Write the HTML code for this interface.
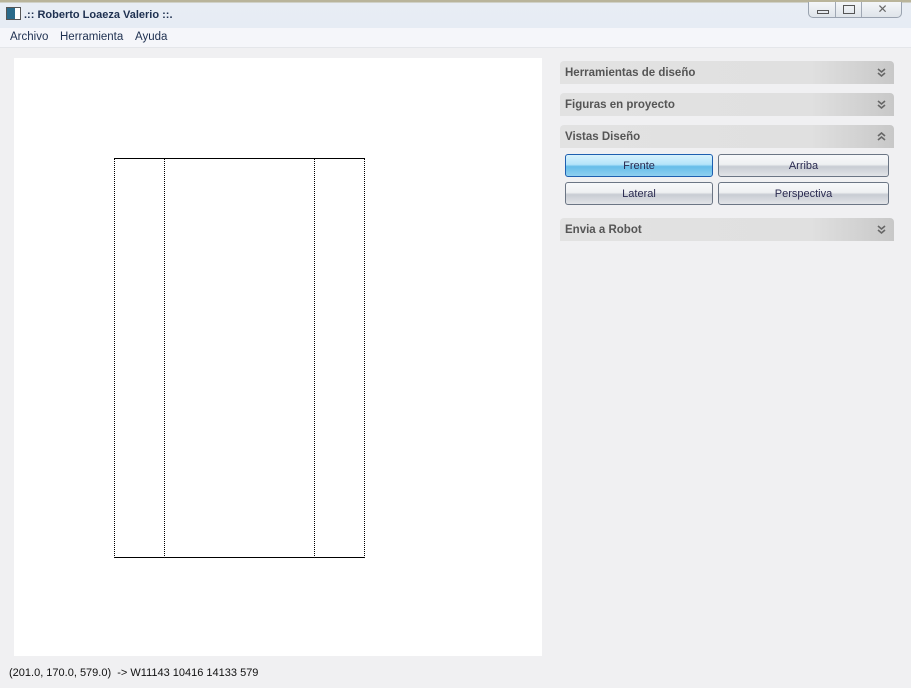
<!DOCTYPE html>
<html><head><meta charset="utf-8"><style>
*{margin:0;padding:0;box-sizing:border-box}
body{width:911px;height:688px;overflow:hidden;background:#f0f0f2;font-family:"Liberation Sans",sans-serif;position:relative}
.title{position:absolute;left:0;top:0;width:911px;height:28px;background:linear-gradient(#b9b49a 0,#b9b49a 2px,#e8edf4 3px,#e6ecf4 28px);}
.title .t{position:absolute;left:24px;top:9px;font-size:11px;font-weight:bold;color:#1e3050}
.ico{position:absolute;left:6px;top:7px;width:15px;height:13px;border:1px solid #555;background:linear-gradient(90deg,#2a6a8a 0 60%,#fff 60%)}
.ctl{position:absolute;left:808px;top:2px;width:94px;height:16px;border:1px solid #9aa3b0;border-top:none;border-radius:0 0 5px 5px;background:linear-gradient(#f4f6f9,#dfe4ea)}
.ctl div{position:absolute;top:0;height:15px;border-right:1px solid #a0a8b4}
.menu{position:absolute;left:0;top:28px;width:911px;height:20px;background:#f5f6fa;border-bottom:1px solid #e4e6ea}
.menu span{position:absolute;top:3px;font-size:11.5px;color:#1e3050}
.canvas{position:absolute;left:14px;top:58px;width:528px;height:598px;background:#fff}
.hdr{position:absolute;left:560px;width:334px;height:23px;border-radius:4px 4px 0 0;background:linear-gradient(90deg,#e2e2e2 0,#e0e0e0 75%,#c8c8c8 100%);font-size:11.5px;font-weight:bold;color:#555}
.hdr span{position:absolute;left:5px;top:6px}
.hdr svg{position:absolute;right:8px;top:7px}
.btn{position:absolute;height:23px;border:1px solid #6b7584;border-radius:3px;background:linear-gradient(#f7f8fa 0,#eef0f2 45%,#c8ccd3 55%,#e2e4e8 100%);font-size:11px;color:#2a2a50;text-align:center;line-height:22px}
.btn.on{border-color:#1e5fb0;background:linear-gradient(#d8f2fd 0,#b4e4fa 45%,#66bde9 55%,#8fd0f0 100%)}
.status{position:absolute;left:9px;top:667px;font-size:11px;color:#111}
</style></head><body>
<div class="title"><div class="ico"></div><div class="t">.:: Roberto Loaeza Valerio ::.</div>
<div class="ctl"><div style="left:0;width:27px"><span style="position:absolute;left:8px;top:8px;width:12px;height:4px;border:1px solid #555"></span></div><div style="left:27px;width:26px"><span style="position:absolute;left:7px;top:3px;width:12px;height:9px;border:1px solid #555"></span></div><div style="left:53px;width:41px;border:none;text-align:center;font-size:12px;color:#666;line-height:15px">✕</div></div>
</div>
<div class="menu"><span style="left:10px">Archivo</span><span style="left:60px">Herramienta</span><span style="left:135px">Ayuda</span></div>
<div class="canvas"></div>
<svg style="position:absolute;left:0;top:0" width="911" height="688">
<line x1="114" y1="158.5" x2="365" y2="158.5" stroke="#000"/>
<line x1="114" y1="557.5" x2="365" y2="557.5" stroke="#000"/>
<g stroke="#000" stroke-dasharray="1,1">
<line x1="114.5" y1="159" x2="114.5" y2="557"/><line x1="164.5" y1="159" x2="164.5" y2="557"/>
<line x1="314.5" y1="159" x2="314.5" y2="557"/><line x1="364.5" y1="159" x2="364.5" y2="557"/>
</g></svg>
<div class="hdr" style="top:61px"><span>Herramientas de diseño</span><svg width="9" height="10"><path d="M1 1l3.5 3 3.5-3M1 5l3.5 3 3.5-3" stroke="#666" stroke-width="1.6" fill="none"/></svg></div>
<div class="hdr" style="top:93px"><span>Figuras en proyecto</span><svg width="9" height="10"><path d="M1 1l3.5 3 3.5-3M1 5l3.5 3 3.5-3" stroke="#666" stroke-width="1.6" fill="none"/></svg></div>
<div class="hdr" style="top:125px"><span>Vistas Diseño</span><svg width="9" height="10"><path d="M1 4l3.5-3 3.5 3M1 8l3.5-3 3.5 3" stroke="#666" stroke-width="1.6" fill="none"/></svg></div>
<div class="btn on" style="left:565px;top:154px;width:148px">Frente</div>
<div class="btn" style="left:718px;top:154px;width:171px">Arriba</div>
<div class="btn" style="left:565px;top:182px;width:148px">Lateral</div>
<div class="btn" style="left:718px;top:182px;width:171px">Perspectiva</div>
<div class="hdr" style="top:218px"><span>Envia a Robot</span><svg width="9" height="10"><path d="M1 1l3.5 3 3.5-3M1 5l3.5 3 3.5-3" stroke="#666" stroke-width="1.6" fill="none"/></svg></div>
<div class="status">(201.0, 170.0, 579.0) &nbsp;-&gt; W11143 10416 14133 579</div>
</body></html>
